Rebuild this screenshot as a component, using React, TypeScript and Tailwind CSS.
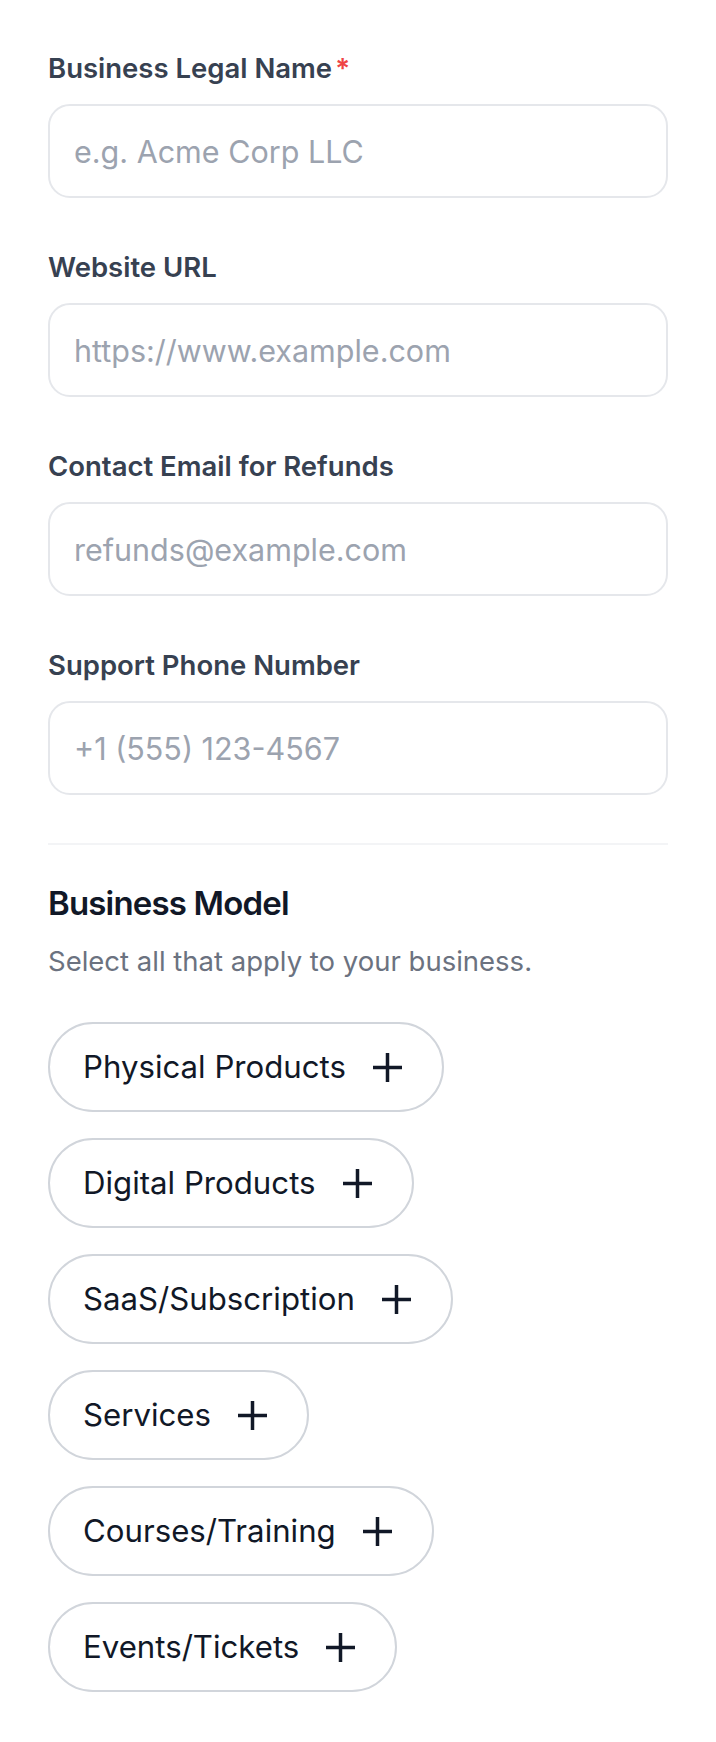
import React from "react";

const fields = [
  { label: "Business Legal Name", placeholder: "e.g. Acme Corp LLC", required: true },
  { label: "Website URL", placeholder: "https://www.example.com" },
  { label: "Contact Email for Refunds", placeholder: "refunds@example.com" },
  { label: "Support Phone Number", placeholder: "+1 (555) 123-4567" },
];

const models = [
  "Physical Products",
  "Digital Products",
  "SaaS/Subscription",
  "Services",
  "Courses/Training",
  "Events/Tickets",
];

function PlusIcon() {
  return (
    <svg width="29" height="29" viewBox="0 0 29 29" fill="none" aria-hidden="true">
      <path d="M14.5 0V29M0 14.5H29" stroke="#111827" strokeWidth="3.5" />
    </svg>
  );
}

export default function App() {
  return (
    <div className="min-h-screen bg-white px-12 pt-12 pb-[49px] font-['Inter',sans-serif]">
      <div className="flex flex-col gap-[49px]">
        {fields.map((f) => (
          <div key={f.label}>
            <label className="block text-[27.5px] leading-[40px] font-semibold text-[#374151]">
              {f.label}
              {f.required && <span className="ml-[3px] text-[#ef4444]">*</span>}
            </label>
            <input
              type="text"
              placeholder={f.placeholder}
              className="mt-4 block h-[94px] w-full rounded-[22px] border-2 border-[#e5e7eb] bg-white px-6 text-[30.5px] text-[#111827] outline-none placeholder:text-[#9ca3af]"
            />
          </div>
        ))}
      </div>

      <div className="mt-12 h-[2px] bg-[#f3f4f6]" />

      <h2 className="mt-[30px] text-[33px] leading-[56px] font-semibold tracking-tight text-[#111827]">
        Business Model
      </h2>
      <p className="mt-[10px] text-[27.5px] leading-[40px] text-[#6b7280]">
        Select all that apply to your business.
      </p>

      <div className="mt-[41px] flex flex-col items-start gap-[26px]">
        {models.map((m) => (
          <button
            key={m}
            type="button"
            className="flex h-[90px] items-center gap-[27px] rounded-full border-2 border-[#d1d5db] bg-white pl-[33px] pr-[40px] text-[31.2px] text-[#111827]"
          >
            <span>{m}</span>
            <PlusIcon />
          </button>
        ))}
      </div>
    </div>
  );
}
